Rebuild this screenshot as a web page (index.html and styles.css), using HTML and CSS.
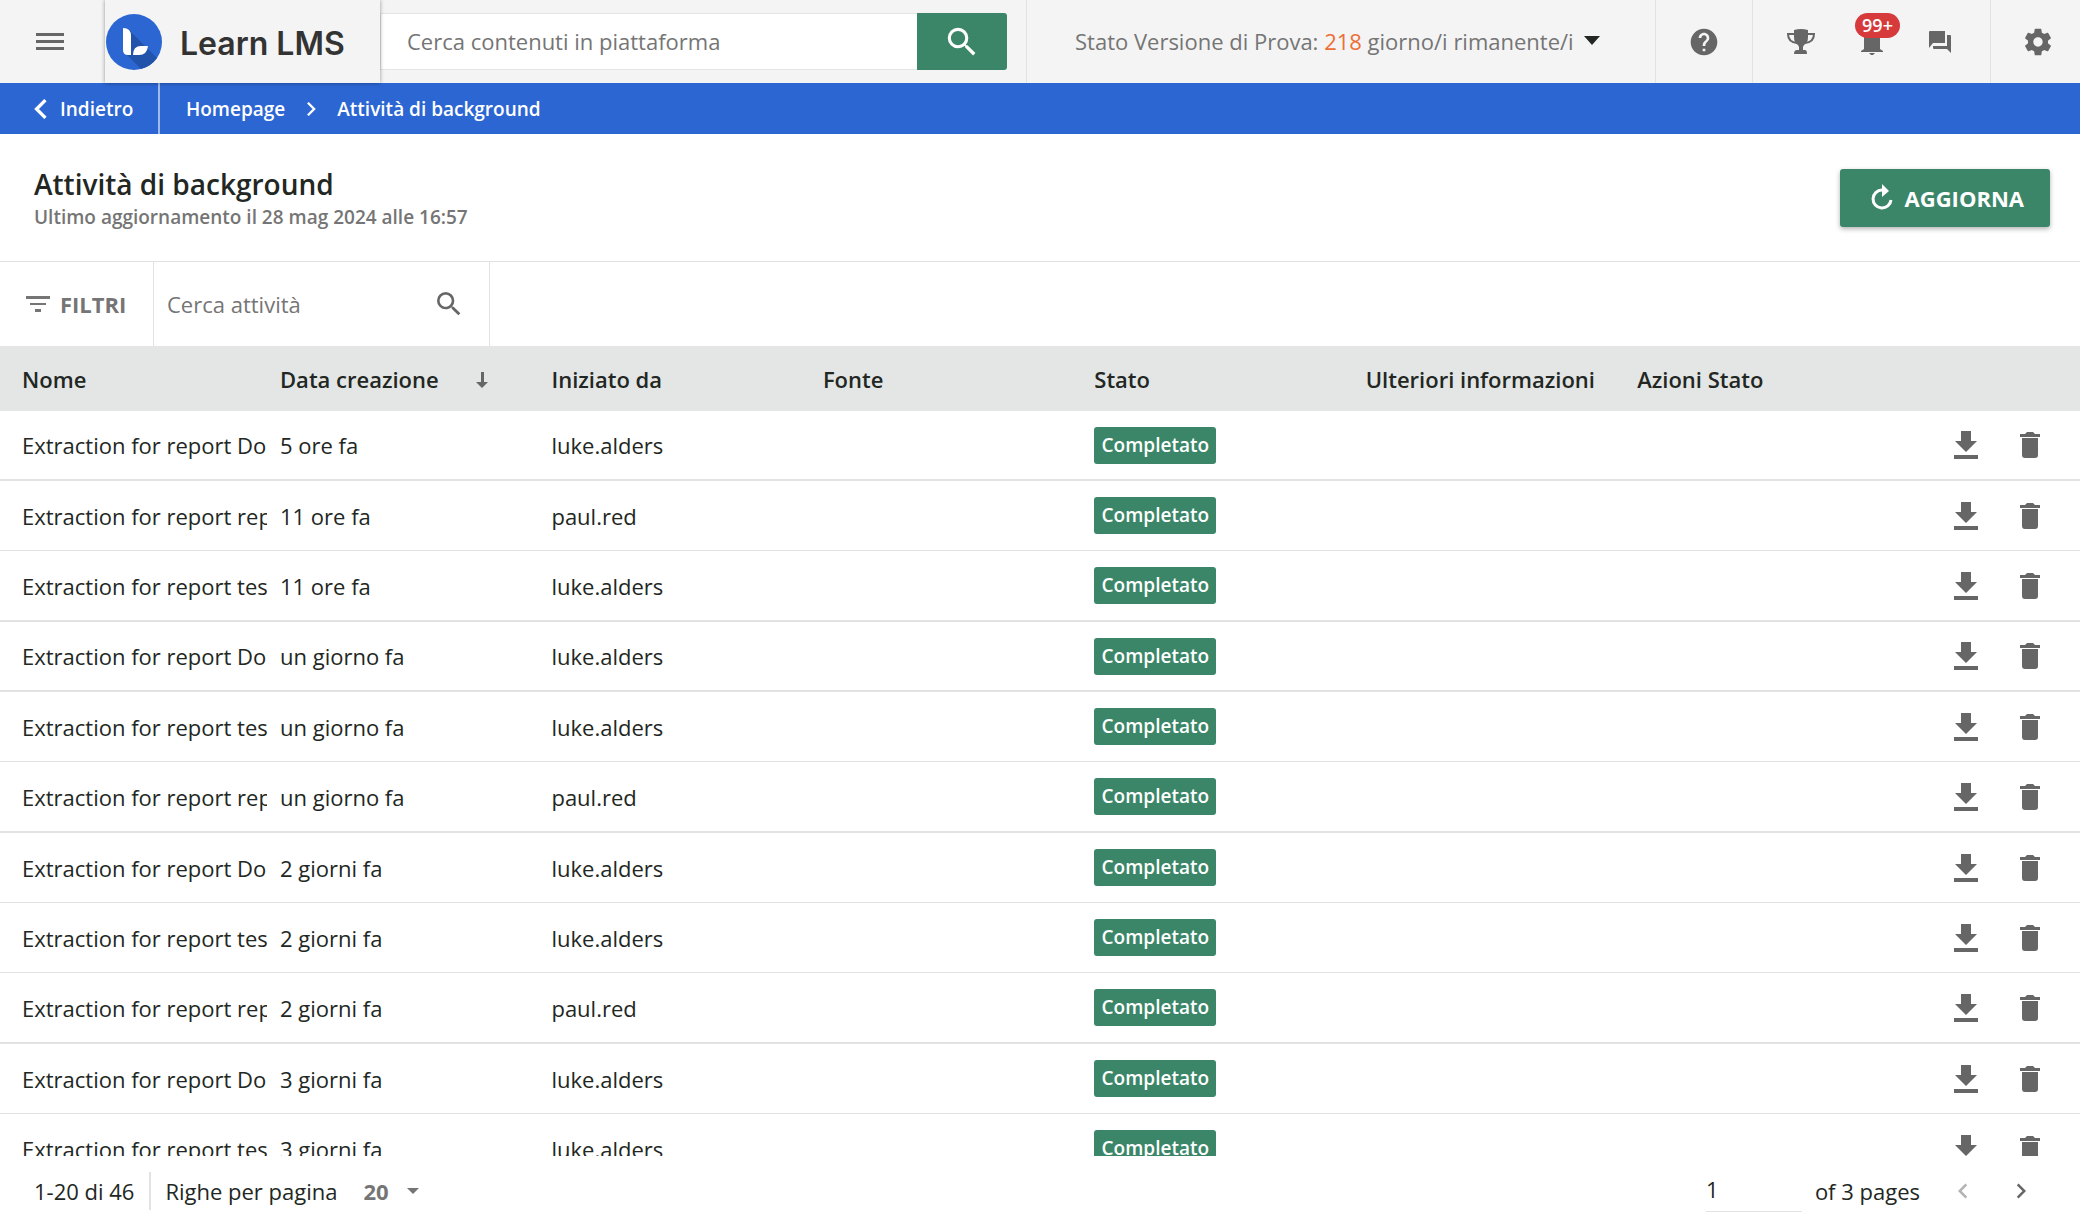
FILE: index.html
```html
<!DOCTYPE html>
<html lang="it">
<head>
    <meta charset="UTF-8">
    <meta name="viewport" content="width=device-width, initial-scale=1.0">
    <title>Attività di background</title>
    <link rel="stylesheet" href="styles.css">
</head>
<body>

<!-- Shared icons -->
<svg class="sprite" aria-hidden="true">
    <symbol id="icon-search" viewBox="0 0 24 24">
        <path d="M15.5 14h-.79l-.28-.27A6.47 6.47 0 0 0 16 9.5 6.5 6.5 0 1 0 9.5 16c1.61 0 3.09-.59 4.23-1.57l.27.28v.79l5 4.99L20.49 19l-4.99-5zm-6 0C7.01 14 5 11.99 5 9.5S7.01 5 9.5 5 14 7.01 14 9.5 11.99 14 9.5 14z"/>
    </symbol>
    <symbol id="icon-download" viewBox="0 0 24 28">
        <path d="M7 0h10v10h6L12 21 1 10h6zM0 24h24v4H0z"/>
    </symbol>
    <symbol id="icon-trash" viewBox="0 0 20 26">
        <path d="M0 2h5l2-2h6l2 2h5v3H0zM2 6h16v17a3 3 0 0 1-3 3H5a3 3 0 0 1-3-3z"/>
    </symbol>
    <symbol id="icon-left" viewBox="0 0 12 18">
        <path d="M10 1L2 9l8 8" fill="none" stroke="currentColor" stroke-width="3"/>
    </symbol>
    <symbol id="icon-right" viewBox="0 0 12 18">
        <path d="M2 1l8 8-8 8" fill="none" stroke="currentColor" stroke-width="3"/>
    </symbol>
</svg>

<div class="page">
    <header class="topbar">
        <button class="icon-button menu" aria-label="Menu">
            <svg width="28" height="20" viewBox="0 0 28 20"><path d="M0 1h28v3H0zM0 8h28v3H0zM0 15h28v3H0z"/></svg>
        </button>
        <a class="logo" href="#">
            <svg width="56" height="56" viewBox="0 0 56 56">
                <circle cx="28" cy="28" r="28" fill="#2c66d2"/>
                <path d="M24 17l27 27A28 28 0 0 1 35 55L19 39z" fill="#2253aa"/>
                <path d="M17 14q8 0 8 8v19h-3q-5 0-5-5z" fill="#fff"/>
                <path d="M42 32q-1 9-9 9h-6q0-9 8-9z" fill="#fff"/>
            </svg>
            <span>Learn LMS</span>
        </a>
        <form class="search">
            <input type="text" placeholder="Cerca contenuti in piattaforma" aria-label="Cerca contenuti in piattaforma">
            <button type="button" aria-label="Cerca"><svg width="38" height="38"><use href="#icon-search"/></svg></button>
        </form>
        <button class="trial">
            <span>Stato Versione di Prova: <b>218</b> giorno/i rimanente/i</span>
            <svg width="16" height="9" viewBox="0 0 16 9"><path d="M0 0h16L8 9z"/></svg>
        </button>
        <button class="icon-button help" aria-label="Aiuto">
            <svg width="32" height="32" viewBox="0 0 24 24"><path d="M12 2C6.48 2 2 6.48 2 12s4.480 10 10 10 10-4.480 10-10S17.520 2 12 2zm1 17h-2v-2h2v2zm2.070-7.750l-.9.920C13.450 12.900 13 13.500 13 15h-2v-.5c0-1.100.45-2.100 1.170-2.830l1.240-1.260c.37-.36.59-.86.59-1.410 0-1.100-.9-2-2-2s-2 .9-2 2H8c0-2.210 1.790-4 4-4s4 1.790 4 4c0 .88-.36 1.680-.93 2.250z"/></svg>
        </button>
        <div class="notices">
            <button class="icon-button" aria-label="Traguardi">
                <svg width="28" height="26" viewBox="0 0 28 26">
                    <path d="M7 1q7-2 14 0v7q0 6-4 8l-1 2v3h2q2 0 2 4H7q0-4 3-4h2v-3l-1-2q-4-2-4-8z"/>
                    <path d="M7 5H1q0 8 9 9M21 5h6q0 8-9 9" fill="none" stroke="currentColor" stroke-width="2"/>
                </svg>
            </button>
            <button class="icon-button" aria-label="Notifiche">
                <svg width="22" height="26" viewBox="0 0 22 26"><path d="M3 20V9q0-6 5-8h6q5 2 5 8v11l3 2v1H0v-1zM8 24h6l-3 3z"/></svg>
                <span class="count">99+</span>
            </button>
            <button class="icon-button" aria-label="Messaggi">
                <svg width="22" height="22" viewBox="0 0 22 22"><path d="M1 0h15v12H4l-4 5V1q0-1 1-1zM18 4h3q1 0 1 1v17l-4-4H5q-1 0-1-1v-2h14z"/></svg>
            </button>
        </div>
        <button class="icon-button settings" aria-label="Impostazioni">
            <svg width="32" height="32" viewBox="0 0 24 24"><path d="M19.430 12.980c.04-.32.07-.64.07-.98s-.03-.66-.07-.98l2.110-1.650c.19-.15.24-.42.12-.64l-2-3.460c-.12-.22-.39-.3-.61-.22l-2.490 1c-.52-.4-1.080-.73-1.690-.98l-.38-2.650C14.460 2.180 14.250 2 14 2h-4c-.25 0-.46.18-.49.42l-.38 2.650c-.61.25-1.170.59-1.690.98l-2.490-1c-.23-.09-.49 0-.61.22l-2 3.460c-.13.22-.07.49.12.64l2.110 1.650c-.04.32-.07.65-.07.98s.03.66.07.98l-2.110 1.650c-.19.15-.24.42-.12.64l2 3.460c.12.22.39.3.61.22l2.490-1c.52.4 1.080.73 1.690.98l.38 2.650c.03.24.24.42.49.42h4c.25 0 .46-.18.49-.42l.38-2.650c.61-.25 1.170-.59 1.690-.98l2.490 1c.23.09.49 0 .61-.22l2-3.460c.12-.22.07-.49-.12-.64l-2.110-1.650zM12 15.500c-1.930 0-3.500-1.570-3.500-3.500s1.570-3.500 3.500-3.500 3.500 1.570 3.500 3.500-1.570 3.500-3.500 3.500z"/></svg>
        </button>
    </header>

    <nav class="breadcrumb">
        <a class="back" href="#"><svg width="14" height="20"><use href="#icon-left"/></svg>Indietro</a>
        <a href="#">Homepage</a>
        <svg width="10" height="14"><use href="#icon-right"/></svg>
        <a href="#">Attività di background</a>
    </nav>

    <section class="heading">
        <div>
            <h1>Attività di background</h1>
            <p>Ultimo aggiornamento il 28 mag 2024 alle 16:57</p>
        </div>
        <button class="refresh">
            <svg width="22" height="27" viewBox="0 0 22 27">
                <path d="M20 16a9 9 0 1 1-9-10" fill="none" stroke="currentColor" stroke-width="3"/>
                <path d="M11 0l7 7-7 6z"/>
            </svg>
            AGGIORNA
        </button>
    </section>

    <div class="toolbar">
        <button class="filters">
            <svg width="24" height="16" viewBox="0 0 24 16"><path d="M0 0h24v3H0zM4 7h16v2H4zM9 13h6v3H9z"/></svg>
            FILTRI
        </button>
        <div class="task-search">
            <input type="text" placeholder="Cerca attività" aria-label="Cerca attività">
            <button aria-label="Cerca"><svg width="32" height="32"><use href="#icon-search"/></svg></button>
        </div>
    </div>

    <main class="list">
        <table>
            <colgroup>
                <col class="col-name"><col class="col"><col class="col"><col class="col"><col class="col"><col class="col"><col>
            </colgroup>
            <thead>
                <tr>
                    <th>Nome</th>
                    <th>Data creazione <svg class="sort" width="12" height="16" viewBox="0 0 12 16"><path d="M5 0h3v10h4l-6 6-6-6h5z"/></svg></th>
                    <th>Iniziato da</th>
                    <th>Fonte</th>
                    <th>Stato</th>
                    <th>Ulteriori informazioni</th>
                    <th>Azioni Stato</th>
                </tr>
            </thead>
            <tbody id="tasks"></tbody>
        </table>
    </main>

    <footer class="pager">
        <span class="range">1-20 di 46</span>
        <label for="rows">Righe per pagina</label>
        <div class="select">
            <select id="rows">
                <option>20</option>
                <option>50</option>
            </select>
            <svg width="12" height="6" viewBox="0 0 12 6"><path d="M0 0h12L6 6z"/></svg>
        </div>
        <input type="text" id="page" value="1">
        <label for="page">of 3 pages</label>
        <button aria-label="Pagina precedente" disabled><svg width="10" height="16"><use href="#icon-left"/></svg></button>
        <button aria-label="Pagina successiva"><svg width="10" height="16"><use href="#icon-right"/></svg></button>
    </footer>
</div>

<script>
    var tasks = [
        ['Do', '5 ore fa', 'luke.alders'],
        ['rep', '11 ore fa', 'paul.red'],
        ['tes', '11 ore fa', 'luke.alders'],
        ['Do', 'un giorno fa', 'luke.alders'],
        ['tes', 'un giorno fa', 'luke.alders'],
        ['rep', 'un giorno fa', 'paul.red'],
        ['Do', '2 giorni fa', 'luke.alders'],
        ['tes', '2 giorni fa', 'luke.alders'],
        ['rep', '2 giorni fa', 'paul.red'],
        ['Do', '3 giorni fa', 'luke.alders'],
        ['tes', '3 giorni fa', 'luke.alders']
    ];

    var body = document.getElementById('tasks');
    tasks.forEach(function (task) {
        var row = body.insertRow(-1);
        row.innerHTML =
            '<td><div class="name">Extraction for report ' + task[0] + '</div></td>' +
            '<td>' + task[1] + '</td>' +
            '<td>' + task[2] + '</td>' +
            '<td></td>' +
            '<td><span class="status">Completato</span></td>' +
            '<td></td>' +
            '<td><div class="actions">' +
            '<button aria-label="Scarica"><svg width="24" height="28"><use href="#icon-download"/></svg></button>' +
            '<button aria-label="Elimina"><svg width="20" height="26"><use href="#icon-trash"/></svg></button>' +
            '</div></td>';
    });
</script>

</body>
</html>
```
FILE: styles.css
```css
* {
    box-sizing: border-box;
}

body {
    margin: 0;
    font-family: "Open Sans", "Noto Sans", sans-serif;
    font-size: 22px;
    line-height: 28px;
    color: #222723;
    background-color: #fff;
}

svg {
    display: block;
    flex: none;
    fill: currentColor;
}

.sprite {
    position: absolute;
    width: 0;
    height: 0;
}

button, input, select {
    font: inherit;
    color: inherit;
    border: none;
    background: none;
    padding: 0;
    margin: 0;
    outline: none;
}

button {
    cursor: pointer;
    display: flex;
    align-items: center;
}

a {
    color: inherit;
    text-decoration: none;
}

input::placeholder {
    color: #757575;
    opacity: 1;
}

.page {
    display: flex;
    flex-direction: column;
    height: 100vh;
}

/* Top bar */
.topbar {
    display: flex;
    flex: none;
    height: 83px;
    background-color: #f4f4f4;
    color: #666;
}

.icon-button {
    position: relative;
    justify-content: center;
}

.menu {
    width: 105px;
    padding-right: 6px;
}

.logo {
    position: relative;
    z-index: 1;
    display: flex;
    align-items: center;
    gap: 18px;
    width: 275px;
    padding-left: 1px;
    background-color: #f4f4f4;
    box-shadow: 0 0 4px rgba(0, 0, 0, 0.4);
    font-family: Inter, sans-serif;
    font-size: 32px;
    font-weight: 600;
    line-height: 36px;
    color: #333;
    white-space: nowrap;
}

.logo span {
    padding-top: 4px;
}

.search {
    display: flex;
    width: 627px;
    height: 57px;
    margin: 13px 19px 0 0;
}

.search input {
    flex: 1;
    min-width: 0;
    padding: 0 26px 2px;
    background-color: #fff;
    border: 1px solid #e4e4e4;
    border-right: none;
}

.search button {
    width: 90px;
    justify-content: center;
    background-color: #3b8668;
    color: #fff;
    border-radius: 0 3px 3px 0;
}

.trial {
    flex: 1;
    gap: 10px;
    padding: 0 0 2px 48px;
    border-left: 1px solid #e2e2e2;
    color: #757575;
    white-space: nowrap;
}

.trial b {
    font-weight: 400;
    color: #ec7036;
}

.trial svg {
    color: #222723;
}

.help {
    width: 97px;
    border-left: 1px solid #e2e2e2;
}

.notices {
    display: flex;
    justify-content: center;
    gap: 46px;
    width: 238px;
    padding-right: 5px;
    border-left: 1px solid #e2e2e2;
}

.count {
    position: absolute;
    top: 13px;
    left: -6px;
    width: 45px;
    height: 25px;
    border-radius: 13px;
    background-color: #d63a3a;
    color: #fff;
    font-size: 18px;
    font-weight: 600;
    line-height: 25px;
    text-align: center;
}

.settings {
    width: 90px;
    padding-left: 5px;
    border-left: 1px solid #e2e2e2;
}

/* Breadcrumb */
.breadcrumb {
    display: flex;
    flex: none;
    align-items: center;
    height: 51px;
    background-color: #2c66d2;
    color: #fff;
    font-size: 19px;
    font-weight: 600;
}

.breadcrumb > svg {
    margin: 0 21px;
}

.back {
    display: flex;
    align-items: center;
    gap: 12px;
    width: 160px;
    height: 100%;
    margin-right: 26px;
    padding-left: 34px;
    border-right: 2px solid #a0b9eb;
}

/* Heading */
.heading {
    display: flex;
    flex: none;
    align-items: center;
    justify-content: space-between;
    height: 127px;
    padding: 0 30px 0 34px;
}

h1 {
    margin: 0;
    font-size: 28px;
    line-height: 38px;
    font-weight: 600;
}

p {
    margin: 0;
    font-size: 19px;
    font-weight: 600;
    color: #757575;
}

.refresh {
    gap: 12px;
    height: 58px;
    padding: 0 26px 0 31px;
    border-radius: 3px;
    background-color: #3b8668;
    box-shadow: 0 2px 5px rgba(0, 0, 0, 0.3);
    color: #fff;
    font-weight: 700;
}

/* Toolbar */
.toolbar {
    display: flex;
    flex: none;
    height: 85px;
    border-top: 1px solid #e2e2e2;
    color: #666;
}

.filters {
    gap: 10px;
    width: 154px;
    padding-left: 26px;
    border-right: 1px solid #e2e2e2;
    color: #757575;
    font-weight: 700;
}

.task-search {
    display: flex;
    width: 336px;
    padding: 0 24px 0 13px;
    border-right: 1px solid #e2e2e2;
}

.task-search input {
    flex: 1;
    min-width: 0;
}

/* Task list */
.list {
    flex: 1;
    min-height: 0;
    overflow: hidden;
}

table {
    width: 100%;
    table-layout: fixed;
    border-spacing: 0;
}

.col-name {
    width: 267px;
}

.col {
    width: 13.05%;
}

th, td {
    padding: 0 0 0 13px;
    text-align: left;
    white-space: nowrap;
}

th:first-child, td:first-child {
    padding-left: 22px;
}

th {
    height: 65px;
    background-color: #e4e6e5;
    font-weight: 600;
}

.sort {
    display: inline-block;
    margin-left: 32px;
    color: #666;
}

td {
    height: 70px;
    border-bottom: 1px solid #e2e2e2;
}

tr:nth-child(1) td, tr:nth-child(4) td {
    border-bottom-width: 2px;
}

tr:nth-child(3n) td {
    height: 71px;
    border-bottom-width: 2px;
}

.name {
    overflow: hidden;
}

.status {
    display: block;
    width: 122px;
    border-radius: 3px;
    background-color: #3b8668;
    color: #fff;
    font-size: 19px;
    font-weight: 600;
    line-height: 37px;
    text-align: center;
}

.actions {
    display: flex;
    justify-content: flex-end;
    gap: 42px;
    padding-right: 40px;
    color: #666;
}

/* Pager */
.pager {
    display: flex;
    flex: none;
    align-items: center;
    height: 70px;
    padding: 0 54px 0 34px;
}

.range {
    margin-right: 14px;
    padding: 5px 15px 5px 0;
    border-right: 2px solid #e2e2e2;
}

.select {
    display: flex;
    align-items: center;
    gap: 18px;
    margin: 0 auto 0 26px;
    color: #757575;
}

.select select {
    appearance: none;
    font-weight: 700;
}

.pager input {
    width: 96px;
    height: 42px;
    padding-bottom: 4px;
    margin-right: 13px;
    border-bottom: 1px solid #e2e2e2;
}

.pager button {
    margin-left: 48px;
    color: #666;
}

.pager button:disabled {
    margin-left: 38px;
    color: #b3b3b3;
}
```
